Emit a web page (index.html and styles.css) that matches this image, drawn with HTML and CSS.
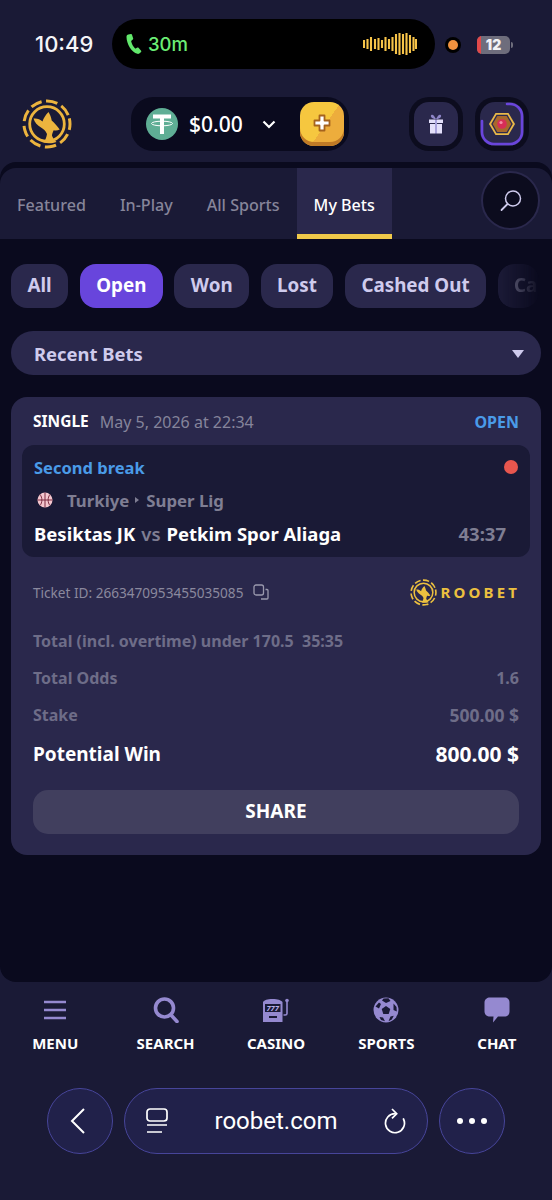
FILE: index.html
```html
<!DOCTYPE html>
<html lang="en">
<head>
<meta charset="utf-8">
<title>Roobet</title>
<link rel="stylesheet" href="styles.css">
</head>
<body>
<svg class="defs" width="0" height="0">
  <symbol id="roo" viewBox="0 0 50 50">
    <circle cx="25" cy="25" r="23" fill="none" stroke="currentColor" stroke-width="3" stroke-dasharray="11.500 4.560" transform="rotate(-14 25 25)"/>
    <circle cx="25" cy="25" r="17.300" fill="none" stroke="currentColor" stroke-width="2.800"/>
    <path fill="currentColor" d="M11.500 19.500c3.500-.5 6.500.8 9 3 1-3.200 3-6.500 6-9.500 1.500 2.500 2.800 5.500 3.200 8.500 3 2.500 5.500 5.500 8 9-2 1-4 1.200-6 .7-.8 1.800-1.700 3.500-1.700 5.500 1 2.500 2.500 4.500 4.500 6.200-4 1.500-9 1.600-13 .6 2-2.500 3-5.500 3.500-8.500-1.500-3.500-3.500-5-6-6.500-3.500-2-6.500-5-7.500-9z"/>
  </symbol>
</svg>

<header class="status">
  <span class="time">10:49</span>
  <div class="island">
    <svg class="phone" viewBox="0 0 16 20"><path fill="#62e86c" d="M2.300.6 5 .1c.5-.1.800.2 1 .6l1.200 3.800c.1.500 0 .8-.4 1.100L5.400 6.700c-.2.200-.3.500-.2.800.6 2.500 2 5 3.700 6.800.2.200.5.200.8.100l1.700-.8c.4-.2.800-.1 1.100.2l2.600 3c.3.400.3.800 0 1.100l-1.800 1.500c-.5.400-1.200.6-1.900.4C5.500 18.300.6 10 .5 3c0-1.200.7-2.200 1.800-2.400z"/></svg>
    <span class="mins">30m</span>
    <svg class="wave" viewBox="0 0 54 24"><path stroke="#f7c449" stroke-width="2.100" d="M1 8v8M4.500 7v10M8 5v14M12 7v10M15.500 6v12M19 8v8M22.500 5v14M26 7v10M29.500 5v14M33 2v20M36.500 1v22M40 2v20M43.500 1v22M47 3v18M50.500 5v14M53 7v10"/></svg>
  </div>
  <span class="rec"><i></i></span>
  <div class="battery"><i class="low"></i><b>12</b></div>
  <i class="nub"></i>
</header>

<div class="topbar">
  <svg class="logo"><use href="#roo"/></svg>
  <div class="wallet">
    <svg class="tether" viewBox="0 0 32 32">
      <circle cx="16" cy="16" r="16" fill="#5fae95"/>
      <path fill="#fff" d="M7 6.500h18v4h-7v15.500h-4V10.500H7z"/>
      <ellipse cx="16" cy="15.500" rx="10.500" ry="2.300" fill="none" stroke="#fff" stroke-width="1"/>
    </svg>
    <span class="amount">$0.00</span>
    <svg class="chev" viewBox="0 0 14 9"><path d="M1.500 1.500 7 7l5.500-5.500" fill="none" stroke="#fff" stroke-width="2.200"/></svg>
    <span class="deposit"><svg viewBox="0 0 20 20"><path fill="#fff" stroke="#a5631e" stroke-width="1.800" d="M7.500 2.500h5v5h5v5h-5v5h-5v-5h-5v-5h5z" stroke-linejoin="round"/></svg></span>
  </div>
  <div class="squares">
    <span class="sq"><span class="sq-in">
      <svg class="gift" viewBox="0 0 16 20"><path fill="#8f86c8" d="M8 5C6 1 4.500 0 3.300 1 2 2.200 3.500 5 8 5zm0 0c2-4 3.500-5 4.700-4C14 2.200 12.500 5 8 5z"/><path fill="#e4e0fa" d="M1 5.500h6v3.500H1zM9 5.500h6v3.500H9zM2 10h5v9.500H2zM9 10h5v9.500H9z"/><path fill="#a9a3dc" d="M7 5.500h2v14H7z"/></svg>
    </span></span>
    <span class="sq"><span class="sq-in">
      <svg class="rank" viewBox="0 0 44 44">
        <path d="M27 2h3a12 12 0 0 1 12 12v16a12 12 0 0 1-12 12H14A12 12 0 0 1 2 30V19" fill="none" stroke="#6a45dc" stroke-width="2.600" stroke-linecap="round"/>
        <path fill="#e9b949" d="M15.500 11h13L35 22l-6.500 11h-13L9 22z"/>
        <path fill="#2c2a4f" d="M16.500 12.800h11L32.800 22l-5.300 9.200h-11L11.200 22z"/>
        <path fill="#a8682c" d="M17.300 14h9.400L31.300 22l-4.600 8h-9.400L12.700 22z"/>
        <circle cx="22" cy="22" r="4.800" fill="#d72d57"/><circle cx="21" cy="20.500" r="1.600" fill="#f58ba5"/>
      </svg>
    </span></span>
  </div>
</div>

<main class="panel">
  <nav class="tabs">
    <a class="tab">Featured</a>
    <a class="tab">In-Play</a>
    <a class="tab">All Sports</a>
    <a class="tab tab-active">My Bets</a>
    <span class="search-circle"><svg viewBox="0 0 24 24"><circle cx="14" cy="9.500" r="7.500" fill="none" stroke="#cfcbed" stroke-width="1.500"/><path d="M8.500 15 2.500 21" stroke="#cfcbed" stroke-width="1.800" stroke-linecap="round"/></svg></span>
  </nav>

  <div class="chips">
    <span class="chip">All</span>
    <span class="chip chip-on">Open</span>
    <span class="chip">Won</span>
    <span class="chip">Lost</span>
    <span class="chip">Cashed Out</span>
    <span class="chip chip-fade">Ca</span>
  </div>

  <div class="select"><span>Recent Bets</span><i class="caret"></i></div>

  <section class="card">
    <div class="card-head">
      <b class="kind">SINGLE</b><span class="date">May 5, 2026 at 22:34</span><b class="state">OPEN</b>
    </div>
    <div class="event">
      <div class="ev-top"><b class="period">Second break</b><i class="live"></i></div>
      <div class="league">
        <svg class="ball" viewBox="0 0 16 16"><circle cx="8" cy="8" r="7.500" fill="#f4c6ce"/><path d="M8 .5v15M.5 8h15M3 2.500c2.500 3 2.500 8 0 11M13 2.500c-2.500 3-2.500 8 0 11" fill="none" stroke="#7c2b40" stroke-width="1"/></svg>
        <span>Turkiye</span><i class="tri"></i><span>Super Lig</span>
      </div>
      <div class="teams"><b>Besiktas JK</b><span class="vs">vs</span><b>Petkim Spor Aliaga</b><span class="clock">43:37</span></div>
    </div>
    <div class="ticket">
      <span>Ticket ID: 2663470953455035085</span>
      <svg class="copy" viewBox="0 0 16 16"><rect x="1" y="1" width="9.500" height="10" rx="2" fill="none" stroke="#9a99ad" stroke-width="1.300"/><path d="M12.500 5.500h1.500a1 1 0 0 1 1 1V14a1 1 0 0 1-1 1H8" fill="none" stroke="#9a99ad" stroke-width="1.300"/></svg>
      <span class="brand"><svg><use href="#roo"/></svg><b>ROOBET</b></span>
    </div>
    <div class="row"><span>Total (incl. overtime) under 170.5&nbsp; 35:35</span></div>
    <div class="row"><span>Total Odds</span><span>1.6</span></div>
    <div class="row"><span>Stake</span><span class="val">500.00 $</span></div>
    <div class="row row-win"><span>Potential Win</span><span class="val">800.00 $</span></div>
    <button class="share">SHARE</button>
  </section>
</main>

<nav class="bottom">
  <a class="nav-item">
    <svg viewBox="0 0 26 26"><path d="M2 5h22M2 13h22M2 21h22" stroke="#9589d0" stroke-width="2.700"/></svg>
    <span>MENU</span>
  </a>
  <a class="nav-item">
    <svg viewBox="0 0 26 26"><circle cx="11.500" cy="11" r="9" fill="none" stroke="#9589d0" stroke-width="3.600"/><path d="M18 18l6 6.500" stroke="#9589d0" stroke-width="3.600" stroke-linecap="round"/></svg>
    <span>SEARCH</span>
  </a>
  <a class="nav-item">
    <svg viewBox="0 0 26 26"><path fill="#9589d0" d="M0 5c1.500-2 4-3 9.500-3s8 1 10 3v20H0z"/><rect x="2" y="7" width="15.500" height="8" fill="#1a1a36"/><rect x="6" y="19" width="8" height="2" fill="#1a1a36"/><text class="sevens" x="9.700" y="14">777</text><path d="M20.500 18h1.700c1 0 1.800-.5 1.800-1.500V5" fill="none" stroke="#9589d0" stroke-width="1.600"/><circle cx="24" cy="3.500" r="1.800" fill="#9589d0"/></svg>
    <span>CASINO</span>
  </a>
  <a class="nav-item">
    <svg viewBox="0 0 26 26"><circle cx="13" cy="13" r="12.500" fill="#9589d0"/><path fill="#1a1a36" d="M13 9l4.300 3.100-1.600 5H10.300l-1.600-5zM2.500 9.500 6 5.500l2 1.500L6 11.500zM10.500 1.500l5-.2L17.500 4l-4.500 2-4-2.500zM20.500 6.500l3 3.500.3 4.500-3.300-1.500zM6.500 20l3.500.5 2 3.800-4-1.300zM17.500 19.500l3.300-.8-2 3.800-3.300 1.700z"/></svg>
    <span>SPORTS</span>
  </a>
  <a class="nav-item">
    <svg viewBox="0 0 26 26"><path fill="#9589d0" d="M6 .5h14.500c3 0 5 2 5 5v9c0 3-2 5-5 5H14l-5 6 .5-6H6c-3 0-5.500-2-5.500-5v-9c0-3 2.500-5 5.500-5z"/></svg>
    <span>CHAT</span>
  </a>
</nav>

<footer class="browser">
  <span class="round"><svg class="back" viewBox="0 0 16 28"><path d="M14 2 2 14l12 12" fill="none" stroke="#fff" stroke-width="2"/></svg></span>
  <div class="url">
    <svg class="tabs-ico" viewBox="0 0 22 26"><rect x="1" y="1" width="20" height="12" rx="3" fill="none" stroke="#fff" stroke-width="1.700"/><path d="M1 17h20M1 24h15" stroke="#fff" stroke-width="1.700"/></svg>
    <span class="addr">roobet.com</span>
    <svg class="reload" viewBox="0 0 22 26"><path d="M11 5.700A9.500 9.500 0 1 0 19.500 11" fill="none" stroke="#fff" stroke-width="1.700" stroke-linecap="round"/><path d="M8 1l4.700 4.700L8 10.400" fill="none" stroke="#fff" stroke-width="1.700"/></svg>
  </div>
  <span class="round"><span class="dots"><i></i><i></i><i></i></span></span>
</footer>
</body>
</html>
```

FILE: styles.css
```css
* { box-sizing: border-box; }
html, body { margin: 0; padding: 0; }
body {
  width: 552px;
  height: 1200px;
  overflow: hidden;
  background: #1a1a36;
  font-family: "Noto Sans", "Liberation Sans", sans-serif;
  color: #fff;
}
.defs { display: block; height: 0; }
i { display: block; }

/* status bar */
.status {
  height: 96px;
  padding: 19px 0 0 35px;
  display: flex;
  align-items: flex-start;
}
.time {
  width: 77px;
  height: 50px;
  font: 500 22px/50px Inter, sans-serif;
  color: #f5f5f8;
  white-space: nowrap;
}
.island {
  width: 323px;
  height: 50px;
  background: #000;
  border-radius: 25px;
  display: flex;
  align-items: center;
  padding-left: 14px;
}
.phone { width: 16px; height: 20px; }
.mins { margin-left: 6px; font: 500 18.500px Inter, sans-serif; color: #6bee75; }
.wave { width: 54px; height: 24px; margin-left: auto; margin-right: 18px; }
.rec {
  width: 16px;
  height: 16px;
  margin: 18px 0 0 10px;
  border-radius: 50%;
  background: #000;
  display: flex;
  align-items: center;
  justify-content: center;
}
.rec i { width: 10px; height: 10px; border-radius: 50%; background: #f0923f; }
.battery {
  position: relative;
  width: 33px;
  height: 18px;
  margin: 17px 0 0 16px;
  background: #6e6d7c;
  border-radius: 5px;
  overflow: hidden;
  text-align: center;
  font: 700 14px/18px Inter, sans-serif;
  color: #f2f2f5;
}
.low { position: absolute; left: 0; top: 0; width: 4px; height: 18px; background: #e2494a; }
.nub { width: 2px; height: 6px; margin: 23px 0 0 1px; border-radius: 0 2px 2px 0; background: #6e6d7c; }

/* top bar */
.topbar {
  height: 66px;
  display: flex;
  align-items: flex-start;
  padding: 1px 23px 0 22px;
}
.logo { width: 50px; height: 50px; margin-top: 2px; color: #ecb43e; }
.wallet {
  width: 218px;
  height: 54px;
  margin-left: 59px;
  background: #0a0a1e;
  border-radius: 22px;
  display: flex;
  align-items: center;
  padding-left: 15px;
}
.tether { width: 32px; height: 32px; }
.amount { margin-left: 11px; font-size: 21px; font-weight: 500; line-height: 1; }
.chev { width: 14px; height: 9px; margin-left: 19px; }
.deposit {
  width: 44px;
  height: 44px;
  margin-left: 24px;
  border-radius: 14px;
  background: linear-gradient(125deg, #f6c73f 55%, #edad3c 55%);
  box-shadow: inset 0 -4px 0 #c07a26;
  display: flex;
  align-items: center;
  justify-content: center;
  padding-bottom: 3px;
}
.deposit svg { width: 20px; height: 20px; }
.squares { margin-left: auto; display: flex; gap: 12px; }
.sq {
  width: 54px;
  height: 54px;
  padding: 5px;
  border-radius: 20px;
  background: #0c0c1e;
}
.sq-in {
  display: flex;
  align-items: center;
  justify-content: center;
  width: 44px;
  height: 44px;
  border-radius: 15px;
  background: #2a284c;
}
.gift { width: 16px; height: 20px; }
.rank { width: 44px; height: 44px; }

/* main panel */
.panel {
  height: 820px;
  background: #0a0a1e;
  border-radius: 16px;
  padding-top: 6px;
  overflow: hidden;
}
.tabs {
  position: relative;
  height: 71px;
  background: #1a1a36;
  border-radius: 16px 16px 0 0;
  display: flex;
}
.tab {
  height: 71px;
  padding: 0 17px;
  font-size: 16.100px;
  font-weight: 500;
  line-height: 75px;
  color: #86859a;
}
.tab-active {
  background: #2a284c;
  color: #fff;
  border-bottom: 5px solid #f0c94a;
}
.search-circle {
  position: absolute;
  right: 12px;
  top: 3px;
  width: 59px;
  height: 59px;
  border-radius: 50%;
  background: #0c0c1e;
  border: 2px solid #2a284c;
  display: flex;
  align-items: center;
  justify-content: center;
}
.search-circle svg { width: 24px; height: 24px; }

.chips {
  display: flex;
  gap: 11.500px;
  padding: 25px 0 0 11px;
}
.chip {
  flex: none;
  height: 44px;
  padding: 0 16.500px;
  border-radius: 16px;
  background: #2a284c;
  color: #cfcbed;
  font-size: 18.800px;
  font-weight: 700;
  line-height: 43px;
}
.chip-on { background: #6845dc; color: #fff; }
.chip-fade {
  width: 41px;
  padding-right: 0;
  -webkit-mask-image: linear-gradient(90deg, rgba(0,0,0,.55), transparent 42px);
  mask-image: linear-gradient(90deg, rgba(0,0,0,.55), transparent 42px);
}

.select {
  margin: 23px 11px 0;
  height: 44px;
  padding: 1px 17px 0 23px;
  border-radius: 22px;
  background: #2a284c;
  color: #cfcbed;
  font-size: 18.400px;
  font-weight: 700;
  line-height: 44px;
  display: flex;
  align-items: center;
  justify-content: space-between;
}
.caret {
  width: 0;
  height: 0;
  border-left: 6px solid transparent;
  border-right: 6px solid transparent;
  border-top: 8px solid #cfcbed;
}

.card {
  margin: 22px 11px 0;
  height: 458px;
  padding: 13px 11px 0;
  border-radius: 16px;
  background: #2a284c;
}
.card-head {
  height: 24px;
  padding: 0 11px;
  display: flex;
  align-items: center;
  font-size: 16px;
  line-height: 1;
  margin-bottom: 11px;
}
.kind { font-size: 15.500px; font-weight: 700; }
.date { margin-left: 11px; color: #85849b; }
.state { margin-left: auto; color: #4a9be8; font-weight: 700; }

.event {
  height: 112px;
  padding: 10px 24px 0 12px;
  border-radius: 12px;
  background: #1a1a36;
}
.ev-top { display: flex; justify-content: space-between; align-items: center; height: 24px; }
.period { color: #4a9be8; font-size: 16.500px; font-weight: 700; }
.live { width: 14px; height: 14px; border-radius: 50%; background: #e8564e; margin-right: -12px; }
.league {
  height: 42px;
  display: flex;
  align-items: center;
  color: #7f7e93;
  font-size: 16.800px;
  font-weight: 700;
}
.ball { width: 16px; height: 16px; margin: 0 14px 0 3px; }
.tri {
  width: 0;
  height: 0;
  margin: 0 7px 0 6px;
  border-top: 3px solid transparent;
  border-bottom: 3px solid transparent;
  border-left: 4px solid #7f7e93;
}
.teams { display: flex; align-items: center; height: 24px; font-size: 18.500px; }
.teams b { font-weight: 700; }
.vs { margin: 0 6px; color: #7f7e93; font-weight: 600; }
.clock { margin-left: auto; color: #7f7e93; font-weight: 700; }

.ticket {
  display: flex;
  align-items: center;
  height: 60px;
  margin-top: 5px;
  padding: 0 11px;
  color: #8a899e;
  font-size: 13.600px;
}
.copy { width: 16px; height: 16px; margin-left: 10px; }
.brand { margin-left: auto; margin-right: 2px; display: flex; align-items: center; color: #ecc03f; }
.brand svg { width: 27px; height: 27px; }
.brand b { margin-left: 3px; font-size: 15px; font-weight: 700; letter-spacing: 3.200px; margin-right: -3.200px; }

.row {
  height: 37px;
  padding: 0 11px;
  display: flex;
  align-items: center;
  justify-content: space-between;
  color: #6e6d88;
  font-size: 16px;
  font-weight: 700;
}
.val { font-size: 17.500px; }
.row-win { height: 41px; color: #fff; font-size: 19px; }
.row-win .val { font-size: 21px; }
.share {
  display: block;
  width: 486px;
  height: 44px;
  margin: 16px 0 0 11px;
  padding: 0 0 3px;
  border: 0;
  border-radius: 15px;
  background: #413f5e;
  color: #fff;
  font: 700 19px "Noto Sans", sans-serif;
}

/* bottom nav */
.bottom {
  height: 106px;
  display: grid;
  grid-template-columns: repeat(5, 1fr);
  padding-top: 15px;
}
.nav-item {
  display: flex;
  flex-direction: column;
  align-items: center;
  font-size: 15px;
  font-weight: 700;
  line-height: 20px;
}
.nav-item svg { width: 26px; height: 26px; margin-bottom: 10px; }
.sevens {
  font: italic 700 7.500px "Noto Sans", sans-serif;
  fill: #b9b0e8;
  text-anchor: middle;
}

/* browser bar */
.browser {
  display: flex;
  justify-content: center;
  gap: 11px;
}
.round, .url {
  height: 66px;
  border: 1.500px solid #47459a;
  background: #21214a;
  border-radius: 33px;
  display: flex;
  align-items: center;
}
.round { width: 66px; justify-content: center; }
.back { width: 16px; height: 28px; margin-right: 4px; }
.url { width: 304px; padding: 0 21px; justify-content: space-between; }
.tabs-ico { width: 22px; height: 26px; }
.reload { width: 22px; height: 26px; }
.addr { font: 400 24px Roboto, sans-serif; }
.dots { display: flex; gap: 6px; }
.dots i { width: 6px; height: 6px; border-radius: 50%; background: #fff; }
```
